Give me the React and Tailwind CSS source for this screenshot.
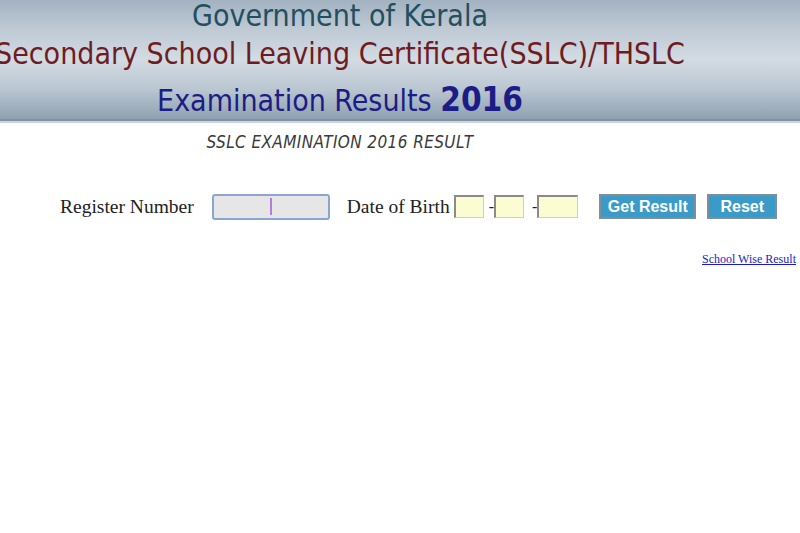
import React from "react";

export default function App() {
  return (
    <div className="w-[800px] h-[533px] bg-white overflow-hidden relative">
      <div className="h-[121px] bg-[linear-gradient(to_bottom,#a3b2c1_0%,#bfcad5_25%,#d3dbe3_50%,#bac6d1_75%,#8fa1b1_100%)] border-b-[2px] border-[#7d93a3]">
        <div className="w-[680px] flex flex-col items-center font-['DejaVu_Sans',sans-serif] font-stretch-condensed">
          <div className="text-[30px] leading-[32px] text-[#234f60] whitespace-nowrap">Government of Kerala</div>
          <div className="text-[30px] leading-[32px] mt-[6px] text-[#6e1c1f] whitespace-nowrap">Secondary School Leaving Certificate(SSLC)/THSLC</div>
          <div className="text-[30px] leading-[32px] text-[#1c1c86] whitespace-nowrap mt-[14px]">
            Examination Results <span className="font-bold text-[33px]">2016</span>
          </div>
        </div>
      </div>
      <div className="h-[2px] bg-[#c9d4dc]"></div>
      <div className="w-[680px] flex justify-center mt-[8px]">
        <div className="italic text-[17px] leading-[22px] text-[#3a3a3a] tracking-[0.4px] font-['DejaVu_Sans',sans-serif] font-stretch-condensed">SSLC EXAMINATION 2016 RESULT</div>
      </div>
      <div className="flex items-center mt-[39px] ml-[60px] font-['Liberation_Serif',serif] text-[19.5px] text-[#222]">
        <span>Register Number</span>
        <div className="ml-[18px] w-[118px] h-[26px] bg-[#e6e6e6] border-2 border-[#8aa4d6] rounded-[3px] flex items-center">
          <div className="ml-[56px] w-[2px] h-[17px] bg-[#b57be0]"></div>
        </div>
        <span className="ml-[17px]">Date of Birth</span>
        <div className="ml-[4px] w-[30px] h-[23px] bg-[#fcfcd2] border border-[#d0d0c0] border-t-2 border-l-2 border-t-[#8a8a8a] border-l-[#8a8a8a]"></div>
        <span className="ml-[5px] text-[16px]">-</span>
        <div className="w-[30px] h-[23px] bg-[#fcfcd2] border border-[#d0d0c0] border-t-2 border-l-2 border-t-[#8a8a8a] border-l-[#8a8a8a]"></div>
        <span className="ml-[8px] text-[16px]">-</span>
        <div className="w-[41px] h-[23px] bg-[#fcfcd2] border border-[#d0d0c0] border-t-2 border-l-2 border-t-[#8a8a8a] border-l-[#8a8a8a]"></div>
        <div className="ml-[21px] w-[97px] h-[25px] bg-[#3a9bc9] border-2 border-[#7f8f99] flex items-center justify-center text-white font-bold text-[16px] font-['Liberation_Sans',sans-serif]">Get Result</div>
        <div className="ml-[11px] w-[70px] h-[25px] bg-[#3a9bc9] border-2 border-[#7f8f99] flex items-center justify-center text-white font-bold text-[16px] font-['Liberation_Sans',sans-serif]">Reset</div>
      </div>
      <div className="mt-[24px] ml-[702px] whitespace-nowrap">
        <a href="#" className="font-['Liberation_Serif',serif] text-[12px] text-[#1a1acc] underline">School Wise Result</a>
      </div>
    </div>
  );
}
